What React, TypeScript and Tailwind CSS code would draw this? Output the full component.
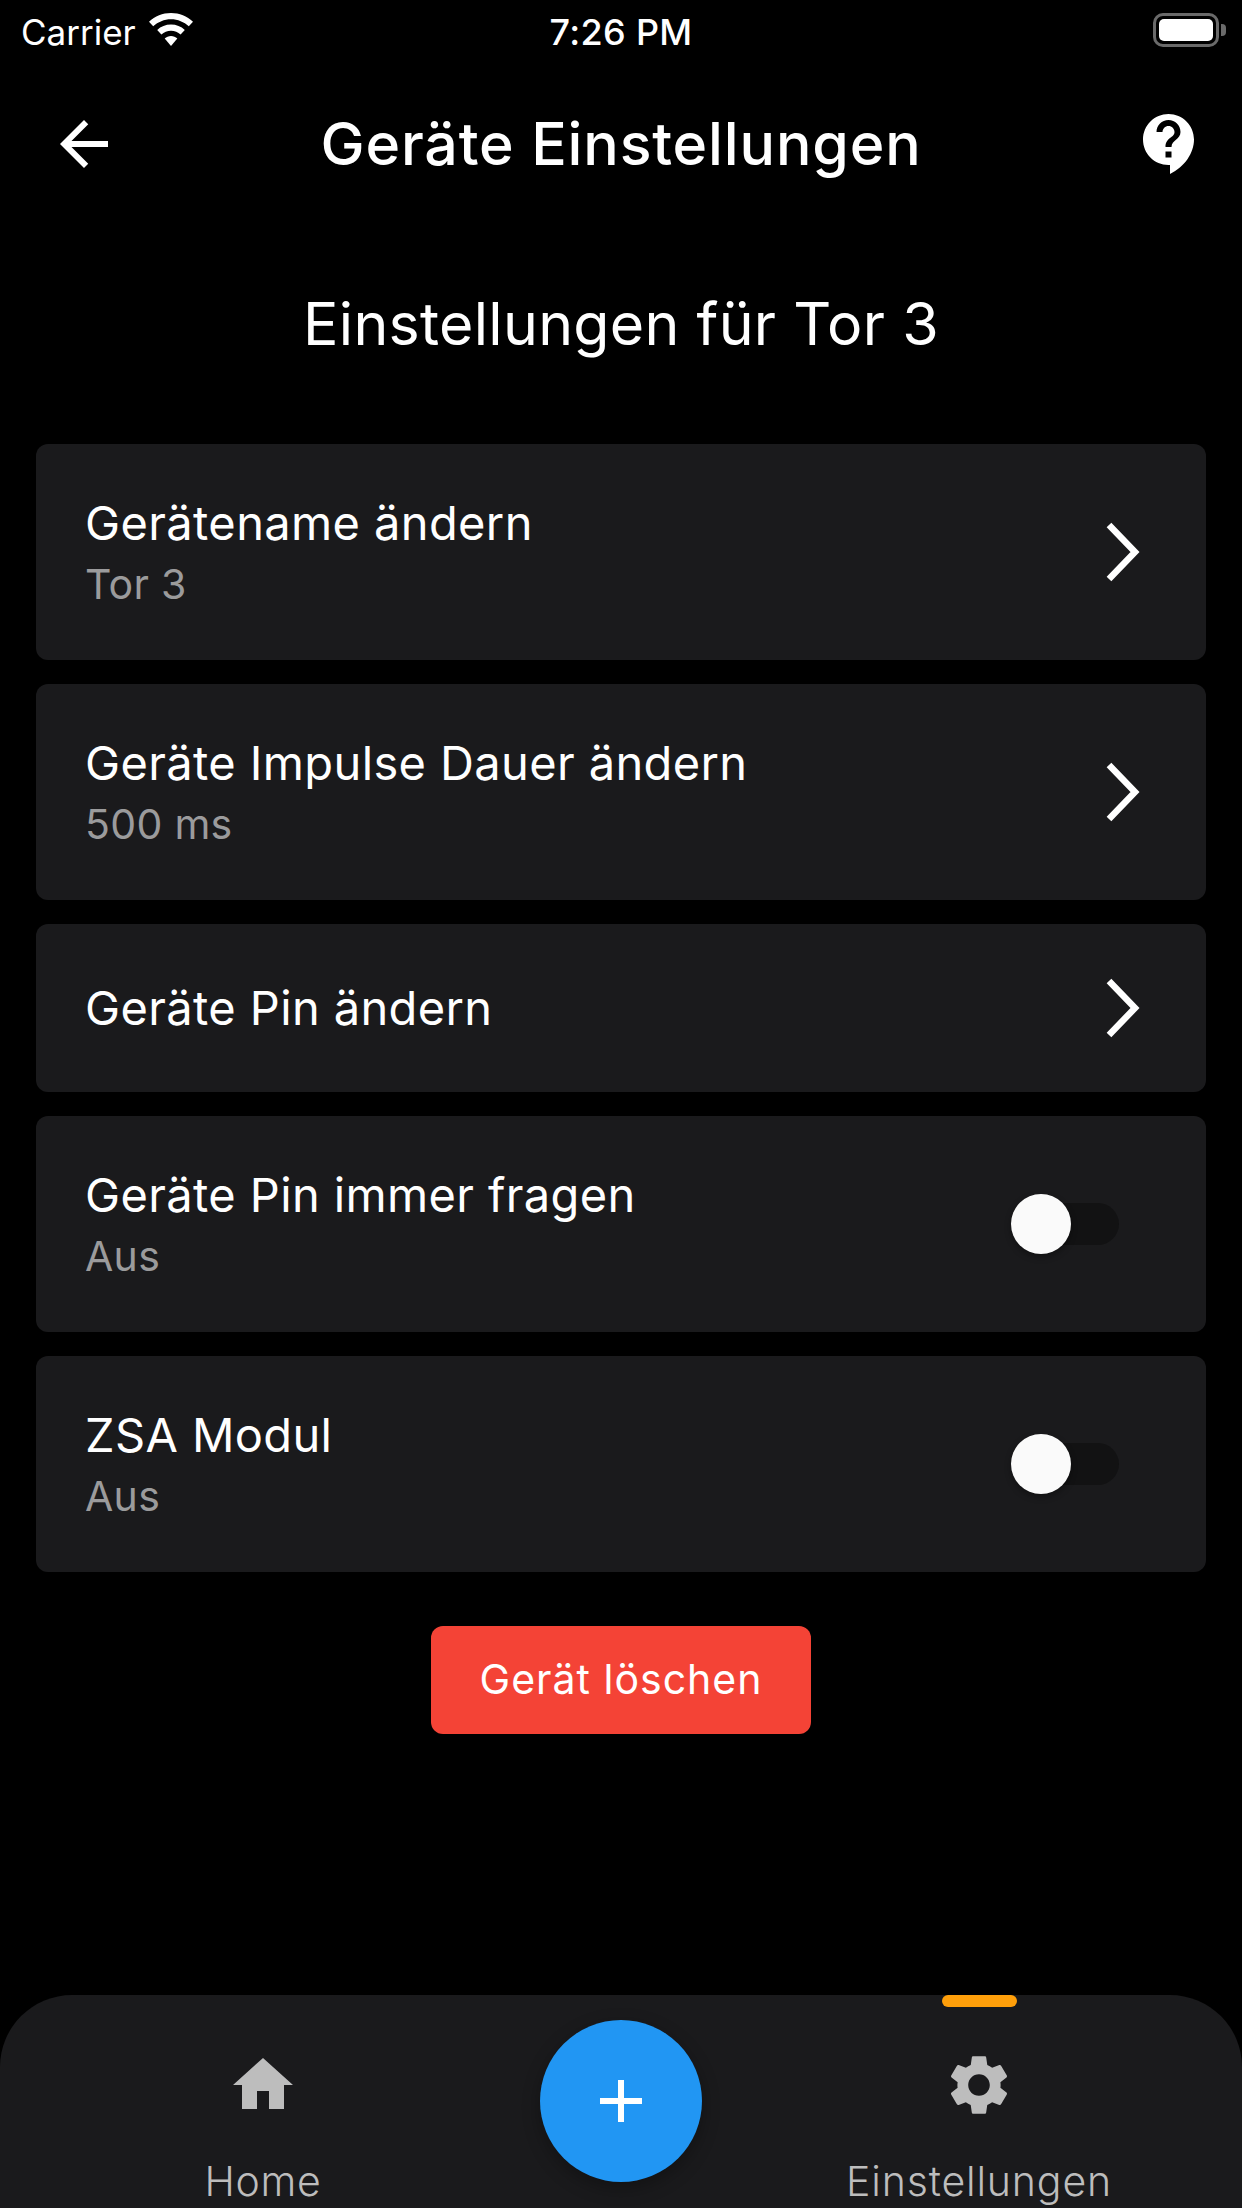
const H = "M10 20v-6h4v6h5v-8h3L12 3 2 12h3v8z";
const G = "M19.14 12.94c.04-.3.06-.61.06-.94 0-.32-.02-.64-.07-.94l2.03-1.58c.18-.14.23-.41.12-.61l-1.92-3.32c-.12-.22-.37-.29-.59-.22l-2.39.96c-.5-.38-1.03-.7-1.62-.94l-.36-2.54c-.04-.24-.24-.41-.48-.41h-3.84c-.24 0-.43.17-.47.41l-.36 2.54c-.59.24-1.13.57-1.62.94l-2.39-.96c-.22-.08-.47 0-.59.22L2.74 8.87c-.12.21-.08.47.12.61l2.03 1.58c-.05.3-.09.63-.09.94s.02.64.07.94l-2.03 1.58c-.18.14-.23.41-.12.61l1.92 3.32c.12.22.37.29.59.22l2.39-.96c.5.38 1.03.7 1.62.94l.36 2.54c.05.24.24.41.48.41h3.84c.24 0 .44-.17.47-.41l.36-2.54c.59-.24 1.13-.56 1.62-.94l2.39.96c.22.08.47 0 .59-.22l1.92-3.32c.12-.22.07-.47-.12-.61l-2.01-1.58zM12 15.6c-1.98 0-3.6-1.62-3.6-3.6s1.62-3.6 3.6-3.6 3.6 1.62 3.6 3.6-1.62 3.6-3.6 3.6z";

function Icon({ d, className }: { d: string; className: string }) {
  return (
    <svg viewBox="0 0 24 24" className={className} fill="currentColor">
      <path d={d} />
    </svg>
  );
}

function Chevron() {
  return (
    <svg viewBox="0 0 40 64" className="w-[40px] h-[64px] mr-[62px] text-white" fill="none" stroke="currentColor" strokeWidth="6.5">
      <polyline points="5,5 31,32 5,59" />
    </svg>
  );
}

function Toggle() {
  return (
    <div className="relative w-[108px] h-[60px] mr-[87px] flex items-center justify-end">
      <div className="w-[99px] h-[42px] rounded-[21px] bg-[#121213]" />
      <div className="absolute left-0 top-0 w-[60px] h-[60px] rounded-full bg-[#fafafa] shadow-[0_3px_6px_rgba(0,0,0,0.35)]" />
    </div>
  );
}

function Card({ title, sub, right, h }: { title: string; sub?: string; right: "chevron" | "toggle"; h: string }) {
  return (
    <div className={`${h} flex items-center justify-between rounded-[12px] bg-[#1a1a1c] pl-[49px]`}>
      <div className="flex flex-col">
        <div className="text-[47px] leading-[60px] tracking-[0.38px] text-white">{title}</div>
        {sub && <div className="mt-[3px] text-[41px] leading-[56px] tracking-[0.3px] text-[#9b9b9c]">{sub}</div>}
      </div>
      {right === "chevron" ? <Chevron /> : <Toggle />}
    </div>
  );
}

export default function App() {
  return (
    <div className="w-[1242px] h-[2208px] overflow-hidden bg-black flex flex-col font-['Inter',sans-serif]">
      <div className="h-[60px] shrink-0 relative flex items-center text-white">
        <div className="ml-[21px] mt-[4px] text-[35px] leading-[44px]">Carrier</div>
        <svg viewBox="0 0 44 33" className="ml-[13px] mt-[-2px] w-[44px] h-[33px]" fill="currentColor">
          <path d="M22 0C13.5 0 6 3.3 0 8.7l4.2 4.6C9 9 15.2 6.3 22 6.3s13 2.7 17.8 7l4.2-4.6C38 3.3 30.5 0 22 0z" />
          <path d="M22 11.5c-5.3 0-10.1 2-13.8 5.4l4.2 4.6c2.6-2.3 5.9-3.7 9.6-3.7s7 1.4 9.6 3.7l4.2-4.6C32.1 13.5 27.3 11.5 22 11.5z" />
          <path d="M22 23c-2.4 0-4.6.9-6.3 2.4L22 33l6.3-7.6C26.6 23.9 24.4 23 22 23z" />
        </svg>
        <div className="absolute left-0 right-0 top-[10px] text-center text-[36px] leading-[44px] font-medium tracking-[0.35px]">7:26 PM</div>
        <div className="absolute left-[1153px] top-[13px] w-[66px] h-[34px] rounded-[10px] border-[3px] border-[#6a6a6a] p-[3px]">
          <div className="w-full h-full rounded-[5px] bg-white" />
        </div>
        <div className="absolute left-[1221px] top-[24px] w-[5px] h-[12px] rounded-r-[4px] bg-[#6a6a6a]" />
      </div>

      <div className="mt-[48px] h-[72px] shrink-0 pl-[48px] pr-[36px] flex items-center text-white">
        <Icon d="M20 11H7.83l5.59-5.59L12 4l-8 8 8 8 1.41-1.41L7.83 13H20v-2z" className="w-[72px] h-[72px]" />
        <div className="flex-1 pr-[12px] text-center text-[59px] leading-[72px] font-[450] tracking-[0.85px]">Geräte Einstellungen</div>
        <Icon d="M11.5 2C6.81 2 3 5.81 3 10.5S6.81 19 11.5 19h.5v3c4.86-2.34 8-7 8-11.5C20 5.81 16.19 2 11.5 2zm1 14.5h-2v-2h2v2zm0-3.5h-2c0-3.25 3-3 3-5 0-1.1-.9-2-2-2s-2 .9-2 2h-2c0-2.21 1.79-4 4-4s4 1.79 4 4c0 2.5-3 2.75-3 5z" className="w-[72px] h-[72px]" />
      </div>

      <div className="mt-[108px] h-[72px] shrink-0 text-center text-[59px] leading-[72px] tracking-[0.3px] text-white">Einstellungen für Tor 3</div>

      <div className="mt-[84px] mx-[36px] flex flex-col gap-[24px] shrink-0">
        <Card title="Gerätename ändern" sub="Tor 3" right="chevron" h="h-[216px]" />
        <Card title="Geräte Impulse Dauer ändern" sub="500 ms" right="chevron" h="h-[216px]" />
        <Card title="Geräte Pin ändern" right="chevron" h="h-[168px]" />
        <Card title="Geräte Pin immer fragen" sub="Aus" right="toggle" h="h-[216px]" />
        <Card title="ZSA Modul" sub="Aus" right="toggle" h="h-[216px]" />
      </div>

      <div className="mt-[54px] flex justify-center shrink-0">
        <div className="w-[380px] h-[108px] rounded-[12px] bg-[#f44336] flex items-center justify-center text-[41px] tracking-[1px] text-white">Gerät löschen</div>
      </div>

      <div className="flex-1" />

      <div className="relative h-[213px] shrink-0 rounded-t-[72px] bg-[#1a1a1c] flex items-start">
        <div className="w-[526px] flex flex-col items-center pt-[54px] text-[#bdbdbd]">
          <Icon d={H} className="w-[72px] h-[72px]" />
          <div className="mt-[34px] text-[41px] leading-[52px] tracking-[0.7px] font-light">Home</div>
        </div>
        <div className="w-[190px] flex justify-center pt-[25px]">
          <div className="w-[162px] h-[162px] rounded-full bg-[#2196f3] shadow-[0_6px_18px_rgba(0,0,0,0.3)] flex items-center justify-center text-white">
            <Icon d="M19 13h-6v6h-2v-6H5v-2h6V5h2v6h6v2z" className="w-[72px] h-[72px]" />
          </div>
        </div>
        <div className="w-[526px] flex flex-col items-center pt-[54px] text-[#bdbdbd]">
          <Icon d={G} className="w-[72px] h-[72px]" />
          <div className="mt-[34px] text-[41px] leading-[52px] tracking-[0.85px] font-light">Einstellungen</div>
        </div>
        <div className="absolute left-[942px] top-0 w-[75px] h-[12px] rounded-[6px] bg-[#ff9f0a]" />
      </div>
    </div>
  );
}
